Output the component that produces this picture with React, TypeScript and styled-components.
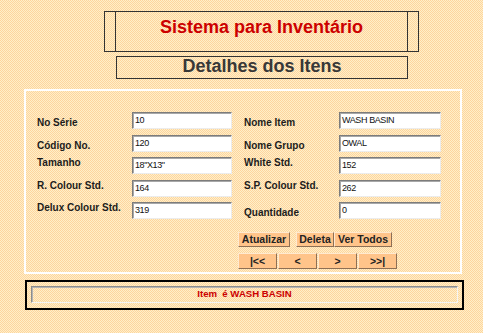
import React from 'react';
import styled, { createGlobalStyle } from 'styled-components';

const GlobalStyle = createGlobalStyle`
  html, body {
    margin: 0;
    padding: 0;
  }
  body {
    width: 483px;
    height: 333px;
    overflow: hidden;
    background-color: #fde2b6;
    background-image: repeating-conic-gradient(#fff0c8 0 25%, #fdd49f 0 50%);
    background-size: 2px 2px;
    font-family: "Liberation Sans", Arial, sans-serif;
  }
`;

const Page = styled.div`
  width: 440px;
  padding: 11px 0 0 24px;
`;

const TitleTable = styled.div`
  box-sizing: border-box;
  margin-left: 80px;
  width: 315px;
  height: 41px;
  border: 1px solid #333;
  display: grid;
  grid-template-columns: 10px 1fr 10px;
`;

const TitleCell = styled.div`
  border-left: 1px solid #333;
  border-right: 1px solid #333;
  text-align: center;
  padding-top: 6px;
  font-size: 18px;
  line-height: 18px;
  font-weight: bold;
  color: #cc0000;
`;

const SubTitle = styled.div`
  box-sizing: border-box;
  margin: 4px 0 0 92px;
  width: 292px;
  height: 23px;
  border: 1px solid #333;
  text-align: center;
  font-size: 18px;
  line-height: 19px;
  font-weight: bold;
  color: #383838;
`;

const Panel = styled.div`
  box-sizing: border-box;
  margin-top: 10px;
  width: 438px;
  height: 185px;
  border: 2px solid #fff;
  padding: 21px 0 0 11px;
`;

const FormGrid = styled.div`
  display: grid;
  grid-template-columns: 95px 100px 12px 95px 102px;
  grid-auto-rows: 17px;
  row-gap: 5.5px;
`;

const Label = styled.div<{ $align: 'start' | 'end' }>`
  align-self: ${p => p.$align};
  font-size: 10px;
  line-height: 12px;
  font-weight: bold;
  color: #1c1c1c;
  white-space: nowrap;
`;

const Field = styled.div`
  box-sizing: border-box;
  height: 17px;
  background: #fff;
  border: 1px solid;
  border-color: #7c7c7c #ececec #ececec #7c7c7c;
  box-shadow: inset 1px 1px 0 #a8a8a8;
  padding: 2px 0 0 2px;
  font-size: 9px;
  line-height: 10px;
  letter-spacing: -0.4px;
  color: #111;
  white-space: nowrap;
  overflow: hidden;
`;

const Spacer = styled.div``;

const Actions = styled.div`
  margin: 13px 0 0 201px;
  display: flex;
  flex-direction: column;
  gap: 6px;
`;

const ButtonRow = styled.div<{ $gap: number }>`
  display: flex;
  gap: ${p => p.$gap}px;
`;

const Button = styled.button<{ $w: number; $h: number }>`
  box-sizing: border-box;
  width: ${p => p.$w}px;
  height: ${p => p.$h}px;
  padding: 0;
  margin: 0;
  background: #ffc48a;
  border: 1px solid;
  border-color: #ffe9cf #8d6f55 #8d6f55 #ffe9cf;
  font-family: "Liberation Sans", Arial, sans-serif;
  font-size: 10.5px;
  line-height: 13px;
  font-weight: bold;
  color: #222;
  white-space: nowrap;
`;

const StatusBox = styled.div`
  box-sizing: border-box;
  margin: 6px 0 0 1px;
  width: 439px;
  height: 30px;
  border: 2px solid #000;
  padding: 4px;
`;

const StatusInner = styled.div`
  box-sizing: border-box;
  height: 17px;
  border: 1px solid;
  border-color: #8c8c8c #f4f4f4 #f4f4f4 #8c8c8c;
  box-shadow: inset 1px 1px 0 #b4b4b4;
  text-align: center;
  font-size: 9.6px;
  line-height: 13px;
  font-weight: bold;
  color: #cc0000;
  white-space: pre;
`;

type Row = {
  left: [string, string, 'start' | 'end'];
  right: [string, string, 'start' | 'end'];
};

const rows: Row[] = [
  { left: ['No Série', '10', 'end'], right: ['Nome Item', 'WASH BASIN', 'end'] },
  { left: ['Código No.', '120', 'end'], right: ['Nome Grupo', 'OWAL', 'end'] },
  { left: ['Tamanho', '18"X13"', 'start'], right: ['White Std.', '152', 'start'] },
  { left: ['R. Colour Std.', '164', 'start'], right: ['S.P. Colour Std.', '262', 'start'] },
  { left: ['Delux Colour Std.', '319', 'start'], right: ['Quantidade', '0', 'end'] },
];

const App: React.FC = () => {
  return (
    <>
      <GlobalStyle />
      <Page>
        <TitleTable>
          <div />
          <TitleCell>Sistema para Inventário</TitleCell>
          <div />
        </TitleTable>
        <SubTitle>Detalhes dos Itens</SubTitle>

        <Panel>
          <FormGrid>
            {rows.map(r => (
              <React.Fragment key={r.left[0]}>
                <Label $align={r.left[2]}>{r.left[0]}</Label>
                <Field>{r.left[1]}</Field>
                <Spacer />
                <Label $align={r.right[2]}>{r.right[0]}</Label>
                <Field>{r.right[1]}</Field>
              </React.Fragment>
            ))}
          </FormGrid>

          <Actions>
            <ButtonRow $gap={0}>
              <Button $w={52} $h={15}>Atualizar</Button>
              <Button $w={38} $h={15} style={{ marginLeft: 6 }}>Deleta</Button>
              <Button $w={58} $h={15}>Ver Todos</Button>
            </ButtonRow>
            <ButtonRow $gap={1}>
              <Button $w={39} $h={16}>|&lt;&lt;</Button>
              <Button $w={39} $h={16}>&lt;</Button>
              <Button $w={39} $h={16}>&gt;</Button>
              <Button $w={39} $h={16}>&gt;&gt;|</Button>
            </ButtonRow>
          </Actions>
        </Panel>

        <StatusBox>
          <StatusInner>{'Item  é WASH BASIN'}</StatusInner>
        </StatusBox>
      </Page>
    </>
  );
};

export default App;
